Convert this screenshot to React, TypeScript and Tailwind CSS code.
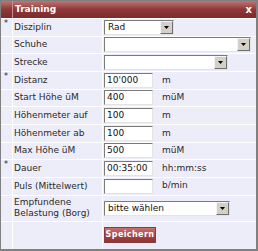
import React from "react";

type Row = {
  label: string;
  required?: boolean;
  kind: "select" | "text";
  value?: string;
  width: string;
  unit?: string;
  tall?: boolean;
};

const rows: Row[] = [
  { label: "Disziplin", required: true, kind: "select", value: "Rad", width: "w-[70px]" },
  { label: "Schuhe", kind: "select", width: "w-[147px]" },
  { label: "Strecke", kind: "select", width: "w-[124px]" },
  { label: "Distanz", required: true, kind: "text", value: "10'000", width: "w-[49px]", unit: "m" },
  { label: "Start Höhe üM", kind: "text", value: "400", width: "w-[49px]", unit: "müM" },
  { label: "Höhenmeter auf", kind: "text", value: "100", width: "w-[49px]", unit: "m" },
  { label: "Höhenmeter ab", kind: "text", value: "100", width: "w-[49px]", unit: "m" },
  { label: "Max Höhe üM", kind: "text", value: "500", width: "w-[49px]", unit: "müM" },
  { label: "Dauer", required: true, kind: "text", value: "00:35:00", width: "w-[49px]", unit: "hh:mm:ss" },
  { label: "Puls (Mittelwert)", kind: "text", value: "", width: "w-[49px]", unit: "b/min" },
  { label: "Empfundene Belastung (Borg)", kind: "select", value: "bitte wählen", width: "w-[126px]", tall: true },
];

function SelectBox({ value, width }: { value?: string; width: string }) {
  return (
    <div className={`${width} flex h-[15px] border border-t-[#7a7a7a] border-l-[#7a7a7a] border-b-[#e4e4e4] border-r-[#e4e4e4] bg-white`}>
      <div className="flex-1 overflow-hidden whitespace-nowrap pl-[3px] leading-[13px] text-[#111]">{value}</div>
      <div className="flex w-[13px] items-center justify-center border border-t-[#f4f4f4] border-l-[#f4f4f4] border-b-[#6e6e6e] border-r-[#6e6e6e] bg-[#d4d0c8]">
        <svg width="5" height="3" viewBox="0 0 5 3">
          <path d="M0 0h5L2.5 3z" fill="#000" />
        </svg>
      </div>
    </div>
  );
}

function TextBox({ value, width }: { value?: string; width: string }) {
  return (
    <div className={`${width} h-[15px] overflow-hidden whitespace-nowrap border border-t-[#7a7a7a] border-l-[#7a7a7a] border-b-[#e4e4e4] border-r-[#e4e4e4] bg-white pl-[2px] leading-[13px] text-[#111]`}>
      {value}
    </div>
  );
}

export default function App() {
  return (
    <div className="h-[251px] w-[258px] bg-white" style={{ fontFamily: '"DejaVu Sans", Verdana, sans-serif' }}>
      <div className="flex h-full w-full flex-col border border-r-2 border-b-2 border-[#808080] bg-[#ededfa] text-[9px] text-[#2a2a2a]">
        <div className="flex h-[17px] bg-gradient-to-b from-[#c07474] via-[#8e3838] to-[#7c2a2a] text-white">
          <div className="w-[12px] border-r border-[#c78c8c]" />
          <div className="flex flex-1 items-center justify-between pl-[2px] pr-[4px] font-bold">
            <span>Training</span>
            <span className="text-[10px]">x</span>
          </div>
        </div>
        {rows.map((r) => (
          <div key={r.label} className={`flex border-t border-white ${r.tall ? "h-[26px]" : "h-[17.67px]"}`}>
            <div className="w-[12px] border-r border-white pl-[3px] pt-[1px] text-[8px] leading-[8px]">{r.required ? "*" : ""}</div>
            <div className="flex w-[90px] items-center border-r border-white pl-[1px] leading-[11px]">
              {r.tall ? (
                <span>
                  Empfundene
                  <br />
                  Belastung (Borg)
                </span>
              ) : (
                r.label
              )}
            </div>
            <div className="flex flex-1 items-center pl-[1px]">
              {r.kind === "select" ? <SelectBox value={r.value} width={r.width} /> : <TextBox value={r.value} width={r.width} />}
              {r.unit && <span className="ml-[9px]">{r.unit}</span>}
            </div>
          </div>
        ))}
        <div className="flex flex-1 border-t border-white">
          <div className="w-[12px] border-r border-white" />
          <div className="w-[90px] border-r border-white" />
          <div className="flex flex-1 items-center pl-[1px]">
            <button className="h-[16px] w-[52px] border border-[#8a3c3c] bg-gradient-to-b from-[#c97272] via-[#a44848] to-[#8d3434] text-[8px] font-bold leading-[14px] tracking-[0.4px] text-white">
              Speichern
            </button>
          </div>
        </div>
      </div>
    </div>
  );
}
